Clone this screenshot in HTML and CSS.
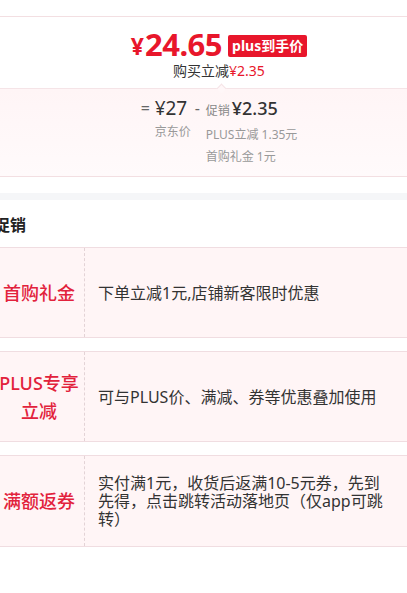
FILE: index.html
```html
<!DOCTYPE html>
<html lang="zh-CN">
<head>
    <meta charset="UTF-8">
    <meta name="viewport" content="width=device-width, initial-scale=1.0">
    <title>促销</title>
    <link rel="stylesheet" href="styles.css">
</head>

<body>
    <div class="page">
        <div class="top-gap"></div>

        <section class="price-card">
            <div class="price-main">
                <span class="yen">¥</span><span class="num">24.65</span>
                <span class="badge">plus到手价</span>
            </div>
            <div class="price-sub">购买立减<em>¥2.35</em></div>
        </section>

        <section class="calc">
            <span class="op">=</span>
            <div class="calc-col">
                <div class="calc-top">¥27</div>
                <div class="calc-label">京东价</div>
            </div>
            <span class="op op-minus">-</span>
            <div class="calc-col">
                <div class="calc-top"><small>促销</small><b>¥2.35</b></div>
                <div class="calc-label">PLUS立减 1.35元</div>
                <div class="calc-label">首购礼金 1元</div>
            </div>
        </section>

        <div class="band"></div>

        <h3 class="section-title">促销</h3>

        <div class="promo-list">
            <div class="promo-row">
                <div class="promo-name">首购礼金</div>
                <div class="promo-desc">下单立减1元,店铺新客限时优惠</div>
            </div>
            <div class="promo-row">
                <div class="promo-name">PLUS专享<br>立减</div>
                <div class="promo-desc">可与PLUS价、满减、券等优惠叠加使用</div>
            </div>
            <div class="promo-row">
                <div class="promo-name">满额返券</div>
                <div class="promo-desc">实付满1元，收货后返满10-5元券，先到先得，点击跳转活动落地页（仅app可跳转）</div>
            </div>
        </div>
    </div>
</body>
</html>
```

FILE: styles.css
```css
body {
    margin: 0;
    overflow: hidden;
    font-family: "Noto Sans", "Noto Sans CJK SC", sans-serif;
    color: #333;
    background: #fff;
}

.page {
    width: 450px;
    margin-left: -6px;
}

.top-gap {
    height: 16px;
    border-bottom: 1px solid #f3dfe2;
}

/* price card */
.price-card {
    position: relative;
    padding: 9px 0 8px;
    text-align: center;
    border-bottom: 1px solid #f5e4e7;
}

.price-card::after {
    content: "";
    position: absolute;
    left: 224px;
    bottom: -4px;
    width: 6px;
    height: 6px;
    background: #fff7f8;
    border-top: 1px solid #f5e4e7;
    border-left: 1px solid #f5e4e7;
    transform: rotate(45deg);
}

.price-main {
    display: flex;
    justify-content: center;
    align-items: center;
    height: 36px;
    color: #e8162b;
    font-weight: 700;
}

.yen {
    font-size: 23px;
    margin-top: 4px;
    margin-right: 1px;
}

.num {
    font-size: 31px;
    letter-spacing: -0.5px;
}

.badge {
    margin-left: 6px;
    margin-top: 4px;
    padding: 0 4px;
    height: 22px;
    line-height: 22px;
    font-size: 14px;
    color: #fff;
    background: #e8162b;
    border-radius: 2px;
}

.price-sub {
    font-size: 14px;
    line-height: 18px;
    color: #333;
}

.price-sub em {
    font-style: normal;
    color: #e8162b;
}

/* calc */
.calc {
    display: flex;
    justify-content: center;
    padding: 6px 0 8px;
    background: linear-gradient(180deg, #fff5f6 0%, #fffafb 100%);
    border-bottom: 1px solid #f3dfe2;
}

.op {
    width: 14px;
    font-size: 16px;
    line-height: 26px;
    color: #666;
}

.op-minus {
    width: 11px;
    margin-left: 4px;
}

.calc-top {
    font-size: 19px;
    line-height: 26px;
    color: #333;
}

.calc-top small {
    font-size: 12px;
    color: #888;
    margin-right: 2px;
}

.calc-top b {
    font-size: 18px;
    font-weight: 500;
}

.calc-label {
    font-size: 12px;
    line-height: 22px;
    color: #999;
}

.band {
    height: 7px;
    margin-top: 16px;
    background: #f5f6f8;
}

.section-title {
    margin: 0;
    padding: 14px 0 11px;
    font-size: 16px;
    line-height: 22px;
    font-weight: 700;
    color: #222;
}

/* promo rows */
.promo-list {
    display: flex;
    flex-direction: column;
    gap: 13px;
}

.promo-row {
    display: flex;
    min-height: 91px;
    box-sizing: border-box;
    background: #fff5f6;
    border-top: 1px solid #f0dde1;
    border-bottom: 1px solid #f0dde1;
}

.promo-name {
    width: 90px;
    flex-shrink: 0;
    display: flex;
    align-items: center;
    justify-content: center;
    text-align: center;
    font-size: 18px;
    line-height: 28px;
    font-weight: 500;
    color: #e2223c;
    border-right: 1px dashed #e3d3d6;
}

.promo-desc {
    flex: 1;
    display: flex;
    align-items: center;
    padding: 18px 56px 18px 13px;
    font-size: 16px;
    line-height: 18px;
    color: #333;
}
```
